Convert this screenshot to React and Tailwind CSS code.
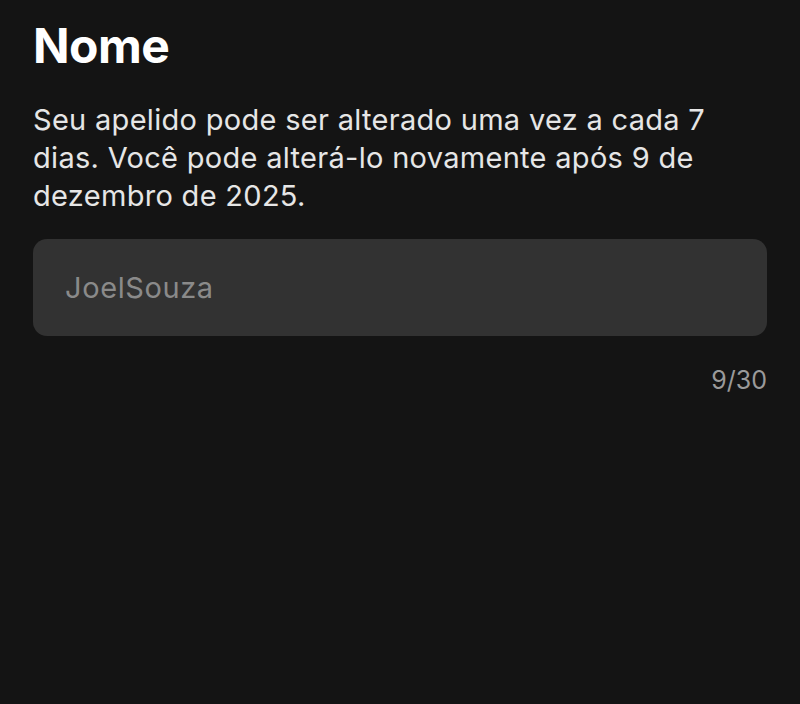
export default function App() {
  return (
    <div className="min-h-screen bg-[#141414] px-[33px] pt-[17px] font-['Inter',sans-serif]">
      <h1 className="text-[48px] font-bold leading-[58px] tracking-[-0.5px] text-white">Nome</h1>
      <p className="mt-[26px] text-[29px] leading-[38px] tracking-[0.3px] text-[#e6e6e6]">
        Seu apelido pode ser alterado uma vez a cada 7 dias. Você pode alterá-lo novamente após 9 de dezembro de 2025.
      </p>
      <div className="mt-[24px] flex h-[97px] items-center rounded-[14px] bg-[#323232] px-[32px]">
        <span className="text-[29px] tracking-[0.6px] text-[#8a8a8a]">JoelSouza</span>
      </div>
      <div className="mt-[26px] text-right text-[25px] text-[#9a9a9a]">9/30</div>
    </div>
  );
}
